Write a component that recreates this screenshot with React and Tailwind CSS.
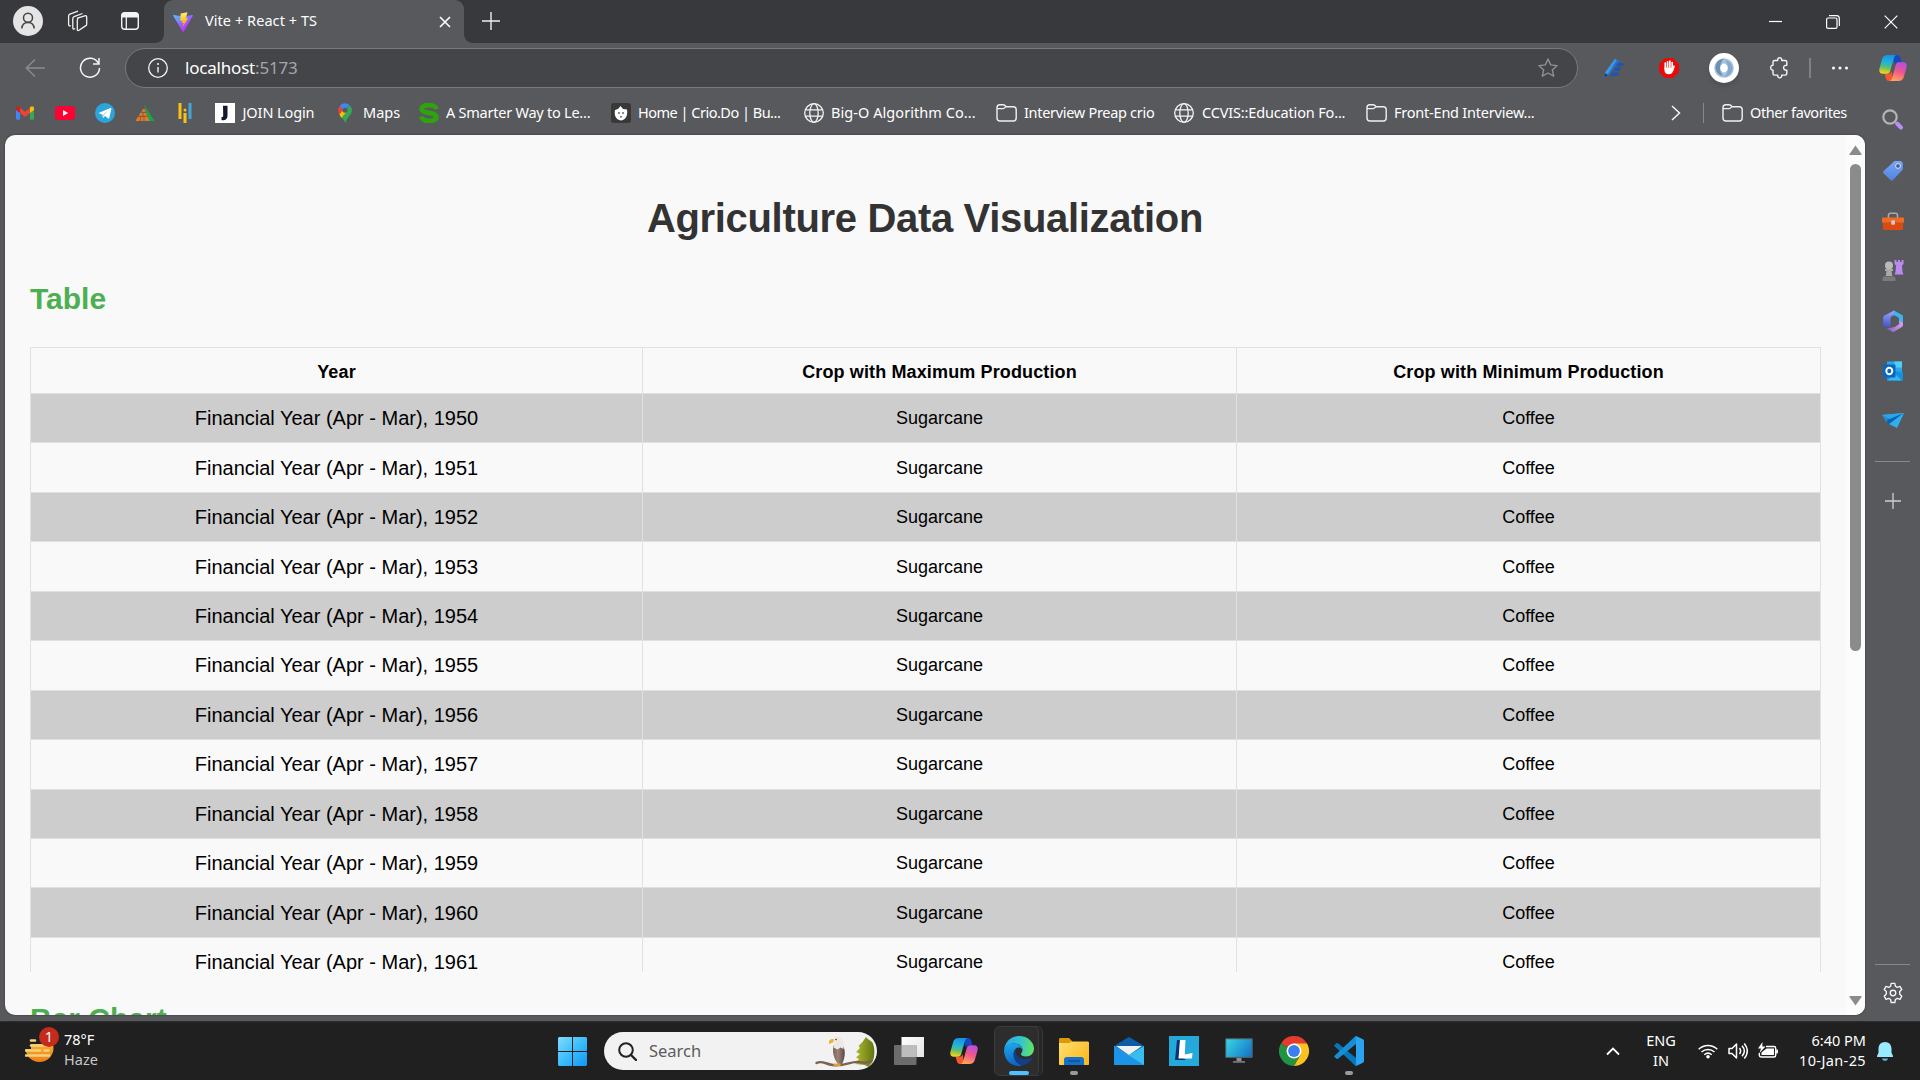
import React from "react";

const UI = "font-['Noto_Sans','Open_Sans',sans-serif]";

function Svg({ w = 20, h = 20, vb, children, className = "" }) {
  return (
    <svg width={w} height={h} viewBox={vb || `0 0 ${w} ${h}`} fill="none" className={`block shrink-0 ${className}`}>
      {children}
    </svg>
  );
}

function T({ className = "", children }) {
  return <span className={`whitespace-nowrap ${className}`}>{children}</span>;
}

function Copilot({ id }) {
  return (
    <Svg w={28} h={26}>
      <defs>
        <linearGradient id={`${id}a`} x1="8" y1="0" x2="5" y2="19" gradientUnits="userSpaceOnUse">
          <stop stopColor="#1593e6" /><stop offset=".4" stopColor="#22b5d8" /><stop offset=".65" stopColor="#5fc06a" /><stop offset=".95" stopColor="#f5d21c" />
        </linearGradient>
        <linearGradient id={`${id}b`} x1="23" y1="7" x2="17" y2="26" gradientUnits="userSpaceOnUse">
          <stop stopColor="#b14fe8" /><stop offset=".5" stopColor="#f0568a" /><stop offset="1" stopColor="#ffa35c" />
        </linearGradient>
      </defs>
      <path d="M14 0h4.200c1.800 0 2.600 1.300 3.100 3l1.200 4.300h-3.300c-2 0-2.900 1-3.400 2.600z" fill="#1447c4" />
      <path d="M14 26H10c-1.800 0-2.700-1.200-3.200-3l-1.200-4.200h3.600c2 0 3-1 3.500-2.700z" fill="#f4582c" />
      <path d="M8.500 0H18c-1.700 0-2.500 1.200-3 2.800l-3.800 13.300c-.5 1.700-1.500 2.700-3.300 2.700H3.600C.8 18.800-.2 16.500.5 13.600L3.200 4C3.900 1.500 5.800 0 8.500 0z" fill={`url(#${id}a)`} />
      <path d="M19.500 26H10c1.700 0 2.500-1.200 3-2.800L16.800 9.900c.5-1.700 1.500-2.700 3.300-2.700h4.300c2.800 0 3.800 2.300 3.100 5.200L24.800 22c-.7 2.500-2.600 4-5.300 4z" fill={`url(#${id}b)`} />
    </Svg>
  );
}

const Globe = () => (
  <Svg>
    <g stroke="#f4f4f4" strokeWidth="1.300">
      <circle cx="10" cy="10" r="9.300" /><ellipse cx="10" cy="10" rx="4.200" ry="9.300" /><path d="M1.500 6.800h17M1.500 13.200h17" />
    </g>
  </Svg>
);

const Folder = () => (
  <Svg w={21} h={20}>
    <path d="M1 5.300V4.500C1 2.700 2 1.700 3.700 1.700H7c.9 0 1.400.3 2 .9l1.200 1.200h7.100c1.800 0 2.900 1 2.900 2.900v8.400c0 1.800-1.100 2.900-2.900 2.900H3.900C2.100 18 1 16.900 1 15.100z" stroke="#f0f0f0" strokeWidth="1.400" />
    <path d="M1 5.600h5.800c.8 0 1.300-.2 1.800-.8l1.200-1" stroke="#f0f0f0" strokeWidth="1.200" />
  </Svg>
);

const Gmail = () => (
  <Svg>
    <path d="M1 5v10.500c0 .8.500 1.200 1.200 1.200H5V8z" fill="#4285f4" />
    <path d="M19 5v10.500c0 .8-.5 1.200-1.200 1.200H15V8z" fill="#34a853" />
    <path d="M5 4.800l5 3.900 5-3.900v5.300l-5 3.900-5-3.900z" fill="#ea4335" />
    <path d="M1 5.200C1 3.400 3 2.500 4.400 3.800L5 4.300v5.800L1 7z" fill="#c5221f" />
    <path d="M19 5.200c0-1.800-2-2.700-3.400-1.400l-.6.5v5.800L19 7z" fill="#fbbc04" />
  </Svg>
);
const YouTube = () => (
  <Svg><rect y="3" width="20" height="14" rx="3.500" fill="#ff0033" /><path d="M8 7v6l5.200-3z" fill="#fff" /></Svg>
);
const Telegram = () => (
  <Svg>
    <circle cx="10" cy="10" r="10" fill="#2ca5dd" />
    <path d="M3.500 10L15.500 5c.6-.2 1 .1.800.9l-2 9c-.1.700-.6.800-1.100.5L10 13l-1.600 1.700c-.3.300-.6.200-.6-.2l-.3-2.800z" fill="#fff" />
    <path d="M7.500 11.700l6-4.500-4.700 5.400-.6 2z" fill="#b9d9ea" />
  </Svg>
);
const Peak = () => (
  <Svg>
    <path d="M9 1.500L19.500 18H14z" fill="#12a84b" />
    <path d="M7.800 6h2l1 3H6.500z M5.500 9.500H11l1.500 3.500H3.700z M3 13.500h9.800L14.500 18H.5z" fill="#e87722" />
    <path d="M3 13.200h9.500M6 9.300h5M8 9.500v3.700M5.500 13.500V18M9 13.500V18" stroke="#6b5745" strokeWidth=".7" />
  </Svg>
);
const Bars = () => (
  <Svg>
    <path d="M5 0v16M10 10v10" stroke="#fbc112" strokeWidth="3" /><circle cx="10" cy="7" r="1.500" fill="#fbc112" /><path d="M15 0v16" stroke="#42a5dc" strokeWidth="3" />
  </Svg>
);
const JoinIcon = () => (
  <Svg><path fill="#fff" d="M0 0h20v20H0z" /><path d="M8 2.800h4.500v10c0 3.500-2.500 5-6 4.200v-3c1 .2 1.700-.2 1.700-1.500z" fill="#111a2c" /></Svg>
);
const Maps = () => (
  <Svg>
    <path d="M4.300 11.300L14.800 2.500C16.500 4 17.200 6 16.900 8.100 16.400 12 12.500 14 10.400 20 9 16.500 5.500 14 4.300 11.300z" fill="#34a853" />
    <path d="M4.300 11.300C2.500 7.500 3 5 5 2.500l5 4.700z" fill="#ea4335" />
    <path d="M5 2.500C7.500-.6 12-.6 14.800 2.500L8.200 8z" fill="#4285f4" />
    <path d="M4.400 11.500l4-4.700 3 2.300-5 5.900z" fill="#fbbc04" />
    <circle cx="10" cy="7.200" r="2.500" fill="#58595d" />
  </Svg>
);
const BigS = () => (
  <Svg>
    <path d="M17.300 6.200C16.600.8 2.600.8 2.700 6 2.800 10.800 17.400 8.800 17.400 14.200 17.400 19.200 3 19.200 2.300 13.600" stroke="#2fa30e" strokeWidth="4.800" />
  </Svg>
);
const Crio = () => (
  <Svg>
    <rect width="20" height="20" rx="3" fill="#383838" />
    <path d="M4 7l3-1 2.500-3L12 6l4 .5c.7 4.500 0 10-6 11C4.500 16.500 3 12 4 7z" fill="#fff" />
    <circle cx="8" cy="10" r=".9" fill="#555" /><circle cx="12" cy="10" r=".9" fill="#555" /><path d="M9 13h2v1.500H9z" fill="#777" />
  </Svg>
);

const marks = [
  ["w-[40px]", Gmail], ["w-[40px]", YouTube], ["w-[40px]", Telegram], ["w-[40px]", Peak], ["w-[40px]", Bars],
  ["w-[120px]", JoinIcon, "JOIN Login", "tracking-[-0.1px] ml-[0.5px]"],
  ["w-[84px]", Maps, "Maps", "ml-[1px]"],
  ["w-[192px]", BigS, "A Smarter Way to Le...", "tracking-[-0.24px]"],
  ["w-[193px]", Crio, "Home | Crio.Do | Bu...", "tracking-[-0.5px]"],
  ["w-[192px]", Globe, "Big-O Algorithm Co...", "tracking-[0.06px]"],
  ["w-[178px]", Folder, "Interview Preap crio", "tracking-[-0.3px]"],
  ["w-[192px]", Globe, "CCVIS::Education Fo...", "tracking-[-0.16px] ml-[1px]"],
  ["w-[200px]", Folder, "Front-End Interview...", "tracking-[-0.22px]"],
];

function TitleBar() {
  return (
    <header className="flex h-[43px] shrink-0 items-center bg-[#38393d]">
      <div className="flex w-[164px] items-center pb-[1px] pl-[13px]">
        <Svg w={30} h={30}>
          <circle cx="15" cy="15" r="15" fill="#e4e4e4" />
          <g stroke="#444" strokeWidth="1.500"><circle cx="15" cy="11.800" r="4.500" /><path d="M8.800 22.500c.3-4 2.700-6 6.200-6s5.900 2 6.200 6" /></g>
        </Svg>
        <Svg w={22} h={22} className="ml-[23px]">
          <g stroke="#f2f2f2" strokeWidth="1.300" strokeLinejoin="round">
            <path d="M11.500 8.200l7.200-2.400c1.300-.4 2 .1 2 1.400v7c0 .8-.4 1.400-1.200 1.700l-6.500 4.400c-1 .6-1.700.2-1.700-.9V10.200c0-1 .3-1.600.9-2z" />
            <path d="M9 18.500c-1.200 1-2.200.6-2.200-.7V8.600c0-1 .4-1.600 1.300-2L16.500 3.500" />
            <path d="M4.800 15.500c-1.200.8-2.200.4-2.200-.9V6.200c0-1 .4-1.600 1.300-2L12 1.200" />
          </g>
        </Svg>
        <Svg w={20} h={20} className="ml-[32px]">
          <rect x="1.700" y="1.700" width="16.600" height="16.600" rx="3" stroke="#f4f4f4" strokeWidth="1.400" />
          <path d="M1.700 6.500V4.200c0-1.500 1-2.500 2.500-2.500h11.600c1.500 0 2.500 1 2.500 2.500v2.300z" fill="#f4f4f4" /><path d="M6.300 6v12" stroke="#f4f4f4" strokeWidth="1.300" />
        </Svg>
      </div>
      <div className="relative flex h-full w-[300px] items-center rounded-t-[9px] bg-[#58595d] pl-[9px]">
        <Svg w={9} h={9} className="absolute bottom-0 -left-[9px]"><path d="M9 0v9H0c5 0 9-4 9-9z" fill="#58595d" /></Svg>
        <Svg w={9} h={9} className="absolute -right-[9px] bottom-0"><path d="M0 0v9h9C4 9 0 5 0 0z" fill="#58595d" /></Svg>
        <Svg w={20} h={20} vb="0 0 32 32">
          <defs>
            <linearGradient id="v1" x1="0" y1="2" x2="18" y2="28" gradientUnits="userSpaceOnUse"><stop stopColor="#41d1ff" /><stop offset="1" stopColor="#bd34fe" /></linearGradient>
            <linearGradient id="v2" x1="15" y1="2" x2="19" y2="20" gradientUnits="userSpaceOnUse"><stop stopColor="#ffea83" /><stop offset=".3" stopColor="#ffdd35" /><stop offset="1" stopColor="#ffa800" /></linearGradient>
          </defs>
          <path d="M31.800 5.900L17 31.500c-.3.600-1.100.6-1.400 0L.3 5.900C0 5.300.500 4.600 1.200 4.700l15 2.600 14.800-2.600c.7-.1 1.200.6.800 1.200z" fill="url(#v1)" />
          <path d="M23.300.2l-11 2.200-.7 11.400c0 .3.300.5.500.4l3-.7-.9 4.400 2.800-.6-1.500 6.700c3-4.500 6-10 8.500-14.500l-3.600.6z" fill="url(#v2)" />
        </Svg>
        <T className={`${UI} ml-[12px] pb-[2px] text-[14.500px] tracking-[0.06px] text-white`}>Vite + React + TS</T>
        <Svg w={12} h={12} className="mr-[13px] ml-auto"><path d="M1 1l10 10M11 1L1 11" stroke="#fff" strokeWidth="1.600" /></Svg>
      </div>
      <Svg w={18} h={18} className="mb-[1px] ml-[18px]"><path d="M9 0v18M0 9h18" stroke="#eee" strokeWidth="1.400" /></Svg>
      <div className="ml-auto flex items-center gap-[44px] pr-[22px]">
        <Svg w={13} h={13}><path d="M0 6.500h13" stroke="#fff" strokeWidth="1.200" /></Svg>
        <Svg w={14} h={14}><rect x=".6" y="3" width="10.400" height="10.400" rx="1.500" stroke="#fff" strokeWidth="1.200" /><path d="M3 .7h7.500c1.800 0 2.800 1 2.800 2.800V11" stroke="#fff" strokeWidth="1.200" /></Svg>
        <Svg w={14} h={14}><path d="M.7.7l12.600 12.600M13.300.7L.7 13.300" stroke="#fff" strokeWidth="1.200" /></Svg>
      </div>
    </header>
  );
}

function Toolbar() {
  return (
    <div className="flex h-[50px] shrink-0 items-center">
      <div className="flex w-[125px] items-center gap-[34px] pl-[25px]">
        <Svg w={20} h={20}><path d="M10 1.500L1.300 10l8.700 8.500M1.500 10H20" stroke="#8b8c8f" strokeWidth="1.400" /></Svg>
        <Svg w={22} h={22}><path d="M19.500 6.500A9.500 9.500 0 1 0 20.500 11M20 1v6h-6" stroke="#f4f4f4" strokeWidth="1.500" /></Svg>
      </div>
      <div className="flex h-[40px] w-[1453px] items-center rounded-full border border-[#797a7d] bg-[#444548] pl-[22px]">
        <Svg><circle cx="10" cy="10" r="9.300" stroke="#f4f4f4" strokeWidth="1.300" /><path d="M10 9v5.500" stroke="#f4f4f4" strokeWidth="1.400" /><circle cx="10" cy="6" r="1" fill="#f4f4f4" /></Svg>
        <T className={`${UI} ml-[17px] text-[17px] tracking-[-0.2px] text-white`}>localhost<span className="text-[#a5a6a8]">:5173</span></T>
        <Svg w={20} h={20} className="mr-[19px] ml-auto"><path d="M10 1l2.700 5.900 6.400.7-4.800 4.300 1.400 6.300L10 15l-5.700 3.200 1.400-6.300L.9 7.600l6.400-.7z" stroke="#8f9092" strokeWidth="1.400" strokeLinejoin="round" /></Svg>
      </div>
      <div className="flex flex-1 items-center pl-[26px]">
        <Svg w={20} h={20}>
          <path d="M12 5h8l-1.500 3H12zM11 9.500h6L15.500 13H10zM8 14.500h7L13.500 18H6z" fill="#1a56b4" />
          <path d="M11 .8l4 2.200L4.500 16.800.5 19.500 1 14.500z" fill="#3b97ea" /><path d="M13 1.800l2 1.200L4.500 16.800l-1.500 1z" fill="#1d6fd0" /><path d="M1 15l3 2-3.500 2.500z" fill="#123c80" />
        </Svg>
        <Svg w={20} h={20} className="ml-[35px]">
          <path d="M6 0h8l6 6v8l-6 6H6l-6-6V6z" fill="#ea0a0a" />
          <path d="M6.300 11V5.200M8.600 9V3.800M10.900 9V3.200M13.200 10V4.600M15 8.300l-1.300 4" stroke="#fff" strokeWidth="1.700" strokeLinecap="round" /><path d="M5.500 9.500h8.800l-.3 3.500c-.4 2-1.500 3.200-4 3.200-3 0-4.500-1.500-4.500-4z" fill="#fff" />
        </Svg>
        <div className="ml-[30px] flex size-[30px] items-center justify-center rounded-full bg-white shadow-md">
          <Svg>
            <circle cx="10" cy="10" r="6.800" stroke="#a9c3db" strokeWidth="6" />
            <path d="M10 .8C2.500 1.500-.5 9 3 14c2 3 4.500 4 6.500 3.500C5 15 4.500 6 10 .8z" fill="#6b90b5" /><path d="M10 19.200c7.500-.7 10.500-8.200 7-13.200-2-3-4.500-4-6.500-3.500C15 5 15.500 14 10 19.200z" fill="#86aacd" />
            <ellipse cx="10" cy="10" rx="2.600" ry="4.500" fill="#fff" />
          </Svg>
        </div>
        <Svg w={20} h={22} className="ml-[31px]">
          <path d="M4.500 3.500h3.200c-.2-1.700.6-2.800 2-2.800s2.200 1.100 2 2.800h3.600c.9 0 1.500.6 1.500 1.500v3.300c-1.800-.2-3.200.7-3.200 2.400s1.400 2.600 3.200 2.400v3.500c0 .9-.6 1.500-1.500 1.500h-3.600c.2 1.700-.6 2.800-2 2.800s-2.200-1.100-2-2.800H4.500c-.9 0-1.500-.6-1.500-1.500v-3.500C1.500 13.200.7 12.300.7 10.700S1.500 8.200 3 8.300V5c0-.9.600-1.500 1.500-1.500z" stroke="#f4f4f4" strokeWidth="1.400" strokeLinejoin="round" />
        </Svg>
        <div className="ml-[19px] h-[20px] w-[2px] bg-[#808184]" />
        <Svg w={18} h={4} className="ml-[20px]"><g fill="#fff"><circle cx="2.500" cy="2" r="1.500" /><circle cx="9" cy="2" r="1.500" /><circle cx="15.500" cy="2" r="1.500" /></g></Svg>
      </div>
    </div>
  );
}

function Bookmarks() {
  return (
    <nav className="flex h-[42px] shrink-0 items-center pb-[2px] pl-[15px]">
      {marks.map(([w, Icon, label, tr], i) => (
        <div key={i} className={`flex shrink-0 items-center gap-[7px] ${w}`}>
          <Icon />
          {label && <T className={`${UI} text-[14.500px] text-white ${tr}`}>{label}</T>}
        </div>
      ))}
      <Svg w={10} h={16} className="mr-[22px] ml-auto"><path d="M1 1l7.500 7L1 15" stroke="#f4f4f4" strokeWidth="1.500" /></Svg>
      <div className="mr-[18px] h-[20px] w-px bg-[#87888b]" />
      <div className="flex w-[143px] items-center gap-[7px]"><Folder /><T className={`${UI} text-[14.500px] tracking-[-0.4px] text-white`}>Other favorites</T></div>
    </nav>
  );
}

const years = Array.from({ length: 12 }, (_, i) => 1950 + i);

function Page() {
  return (
    <main className="ml-[5px] flex h-[880px] w-[1860px] shrink-0 overflow-hidden rounded-[10px] bg-[#f9f9f9] font-['Liberation_Sans',Arial,sans-serif] shadow-[0_0_2px_#333]">
      <div className="h-full w-[1841px] pl-[25px]">
        <h1 className="mt-[59px] w-[1790px] text-center text-[40px] leading-[48px] font-bold tracking-[-0.33px] text-[#333]"><T>Agriculture Data Visualization</T></h1>
        <h2 className="mt-[39px] text-[30px] leading-[36px] font-bold text-[#4caf50]"><T>Table</T></h2>
        <div className="mt-[30px] h-[625px] w-[1791px] overflow-hidden">
          <div className="grid grid-cols-[612px_594px_585px] border-t border-[#dee2e6] text-center text-black">
            {["Year", "Crop with Maximum Production", "Crop with Minimum Production"].map((h, i) => (
              <div key={h} className={`flex h-[46px] items-center justify-center border-b border-l border-[#dee2e6] pt-[1px] text-[18px] font-bold tracking-[0.13px] ${i === 2 ? "border-r" : ""}`}><T className="translate-y-px">{h}</T></div>
            ))}
          </div>
          {years.map((y, i) => (
            <div key={y} className={`grid h-[49.450px] grid-cols-[612px_594px_585px] text-center text-black ${i % 2 ? "" : "bg-[#cdcdcd]"}`}>
              <div className="flex items-center justify-center border-b border-l border-[#dee2e6] text-[20px]"><T>Financial Year (Apr - Mar), {y}</T></div>
              <div className="flex items-center justify-center border-b border-l border-[#dee2e6] pt-[1px] text-[18px]"><T>Sugarcane</T></div>
              <div className="flex items-center justify-center border-x border-b border-[#dee2e6] pt-[1px] text-[18px]"><T>Coffee</T></div>
            </div>
          ))}
        </div>
        <h2 className="mt-[29px] text-[30px] leading-[36px] font-bold text-[#4caf50]"><T>Bar Chart</T></h2>
      </div>
      <div className="flex w-[19px] flex-col items-center bg-[#fcfcfc] pt-[10px] pb-[9px]">
        <Svg w={13} h={10}><path d="M6.500.5L12.500 9c.2.500 0 1-.6 1H1.100c-.6 0-.8-.5-.6-1z" fill="#8b8b8b" /></Svg>
        <div className="mt-[9px] h-[487px] w-[11px] rounded-full bg-[#8b8b8b]" />
        <Svg w={13} h={10} className="mt-auto"><path d="M6.500 9.500L.5 1C.3.500.500 0 1.100 0h10.800c.6 0 .8.500.6 1z" fill="#8b8b8b" /></Svg>
      </div>
    </main>
  );
}

function SideBar() {
  return (
    <aside className="flex w-[55px] shrink-0 flex-col items-center pt-[12px]">
      <Copilot id="cs" />
      <Svg w={22} h={22} className="mt-[28px]"><circle cx="8" cy="8" r="6.700" stroke="#b4b4b2" strokeWidth="2.200" /><path d="M15 14.500l4 4" stroke="#bd8cf5" strokeWidth="4" strokeLinecap="round" /></Svg>
      <Svg w={22} h={22} className="mt-[29px]">
        <defs><linearGradient id="tg" x1="0" y1="0" x2="0" y2="22" gradientUnits="userSpaceOnUse"><stop stopColor="#78a8f5" /><stop offset="1" stopColor="#4f80e0" /></linearGradient></defs>
        <path d="M12.500 1H19l1.800 2v6.500L11 20c-.8.800-1.700.8-2.500 0L1.700 13.500c-.8-.8-.8-1.700 0-2.500z" fill="url(#tg)" /><circle cx="16" cy="6" r="2.400" fill="#405b92" stroke="#dce8ff" />
      </Svg>
      <Svg w={22} h={20} className="mt-[30px]">
        <path d="M6.500 6V3.500C6.500 2 7 1.300 8.500 1.300h5c1.500 0 2 .7 2 2.200V6" stroke="#aaa" strokeWidth="1.600" />
        <path d="M1 5.500h20c.6 0 1 .4 1 1v4.200H0V6.500c0-.6.400-1 1-1z" fill="#f26a24" /><path d="M1 10.700h20v5.800c0 .9-.6 1.500-1.500 1.500h-17C1.600 18 1 17.400 1 16.500z" fill="#dc4a12" /><rect x="9.200" y="8.300" width="3.800" height="4.500" rx="1" fill="#c9c9c9" />
      </Svg>
      <Svg w={22} h={23} className="mt-[27px]">
        <path d="M12.500 1h2v2H16V1h2v2h1.500V1h2v4l-1.500 1.500.5 6.500 1 2.500h-9l1-2.500.500-6.500L12.500 5z" fill="#bb8af0" />
        <circle cx="7" cy="6.500" r="4" fill="#bababa" /><path d="M3 10h8v2H9.500l.8 5H3.700l.8-5H3z" fill="#a9a9a9" /><path d="M1.500 17.500h11l1 2v2.500H.5v-2.500z" fill="#7b7b7b" />
      </Svg>
      <Svg w={20} h={22} className="mt-[28px]">
        <defs>
          <linearGradient id="m1" x1="8" y1="0" x2="4" y2="18" gradientUnits="userSpaceOnUse"><stop stopColor="#9fa8ff" /><stop offset="1" stopColor="#4051c8" /></linearGradient>
          <linearGradient id="m3" x1="3" y1="18" x2="18" y2="14" gradientUnits="userSpaceOnUse"><stop stopColor="#7b5bc4" /><stop offset="1" stopColor="#d49ae8" /></linearGradient>
        </defs>
        <path d="M11 .5L1.500 5.500C.5 6 0 7 0 8v6.500c0 1 .5 1.800 1.300 2.300L5.500 17c1.500 0 2-1 2-2V8.500c0-1 .4-1.700 1.300-2.200L13 4z" fill="url(#m1)" />
        <path d="M11 .5l8 4.500c.7.400 1 1 1 2v8L16 11.500V9c0-1-.4-1.500-1.200-2L10.500 5z" fill="#3bb5ee" />
        <path d="M20 13v2c0 .9-.4 1.500-1.200 2l-7.500 4.500c-.9.500-1.700.5-2.600 0l-5-3 8-1.500 4.500-3V10.500z" fill="url(#m3)" />
      </Svg>
      <Svg w={20} h={20} className="mt-[29px]">
        <path d="M4 .5h15V12H4z" fill="#28a8ea" /><path d="M11.500.5H19v6h-7.500z" fill="#50d0f8" /><path d="M4 9.500l16 1.500v7.500c0 .6-.4 1-1 1H4z" fill="#1490df" /><path d="M4 19.500h15L12 13z" fill="#35b8f1" />
        <rect y="3.500" width="12.500" height="13" rx="1" fill="#0a66c0" /><ellipse cx="6.300" cy="10" rx="3" ry="3.300" stroke="#fff" strokeWidth="1.900" />
      </Svg>
      <Svg w={22} h={18} className="mt-[31px]">
        <path d="M0 3L22 1 11 9z" fill="#55c8fa" /><path d="M22 1L4 10 0 3z" fill="#1a9be8" opacity=".75" /><path d="M5 8L22 1 6.500 13z" fill="#0b62ae" /><path d="M22 1L15 16l-8-4z" fill="#2eb0f0" />
      </Svg>
      <div className="mt-[31px] h-px w-[35px] bg-[#87888b]" />
      <Svg w={16} h={16} className="mt-[31px]"><path d="M8 0v16M0 8h16" stroke="#d0d0d0" strokeWidth="1.300" /></Svg>
      <div className="mt-auto h-px w-[35px] bg-[#87888b]" />
      <Svg w={22} h={22} vb="0 0 24 24" className="mt-[17px] mb-[17px]">
        <path d="M10 1.500h4l.6 3.100 2 1.200 3-1 2 3.500-2.300 2.100v2.800l2.300 2.300-2 3.400-3-1-2 1.200-.6 3.300h-4l-.6-3.300-2-1.200-3 1-2-3.400 2.300-2.300v-2.800L2.400 8.300l2-3.500 3 1 2-1.200z" stroke="#f4f4f4" strokeWidth="1.500" strokeLinejoin="round" /><circle cx="12" cy="12" r="3" stroke="#f4f4f4" strokeWidth="1.500" />
      </Svg>
    </aside>
  );
}

function Slot({ children, mark = "" }) {
  return (
    <div className="relative flex h-[50px] w-[55px] items-center justify-center">
      {children}
      {mark && <div className={`absolute bottom-[1px] h-[4px] rounded-full ${mark}`} />}
    </div>
  );
}

function TaskBar() {
  return (
    <footer className="flex h-[59px] shrink-0 items-center border-t border-[#2d2e30] bg-[#202020]">
      <div className="flex w-[558px] items-center pl-[25px]">
        <div className="relative">
          <Svg w={30} h={28}>
            <defs><linearGradient id="hz" x1="0" y1="0" x2="0" y2="26" gradientUnits="userSpaceOnUse"><stop stopColor="#fcc33c" /><stop offset="1" stopColor="#ee7a16" /></linearGradient></defs>
            <circle cx="14.500" cy="11" r="14" fill="url(#hz)" /><path d="M0 0h30v7H0zM0 0h6v12H0z" fill="#202020" />
            <path d="M6 3.500h4M6 8.500h20M1 13.500h14M19.500 13.500h4M1 18.500h23" stroke="#f3d27a" strokeWidth="2.600" strokeLinecap="round" />
          </Svg>
          <div className="absolute -top-[10px] left-[14px] flex size-[20px] items-center justify-center rounded-full bg-[#c42b1c] font-['Noto_Sans',sans-serif] text-[14.500px] text-white">1</div>
        </div>
        <div className={`${UI} ml-[9px] flex flex-col pb-[4px] text-[14.500px] leading-[20px]`}>
          <T className="text-white">78°F</T><T className="text-[#c8c8c8]">Haze</T>
        </div>
      </div>
      <Svg w={29} h={29}>
        <defs><linearGradient id="wn" x1="0" y1="0" x2="29" y2="29" gradientUnits="userSpaceOnUse"><stop stopColor="#7fdcff" /><stop offset=".5" stopColor="#3dbdfb" /><stop offset="1" stopColor="#1294f6" /></linearGradient></defs>
        <path d="M1 0h13v14H0V1zM15 0h13l1 1v13H15zM0 15h14v14H1l-1-1zM15 15h14v13l-1 1H15z" fill="url(#wn)" />
      </Svg>
      <div className="ml-[17px] flex h-[38px] w-[273px] items-center overflow-hidden rounded-full bg-[#f2f2f2] pl-[14px]">
        <Svg w={19} h={19}><circle cx="8" cy="8" r="6.800" stroke="#222" strokeWidth="2" /><path d="M13 13l5 5" stroke="#222" strokeWidth="2.400" strokeLinecap="round" /></Svg>
        <T className={`${UI} ml-[12px] text-[16.500px] text-[#5c5c5c]`}>Search</T>
        <Svg w={62} h={38} className="ml-auto">
          <defs>
            <linearGradient id="tr" x1="42" y1="0" x2="60" y2="0" gradientUnits="userSpaceOnUse"><stop stopColor="#a9b32a" /><stop offset="1" stopColor="#5e7312" /></linearGradient>
            <linearGradient id="eg" x1="16" y1="0" x2="30" y2="0" gradientUnits="userSpaceOnUse"><stop stopColor="#6f5850" /><stop offset=".5" stopColor="#9a8278" /><stop offset="1" stopColor="#5a4640" /></linearGradient>
          </defs>
          <path d="M51 5c1.500 2 4 3.500 6.500 5.500C60 16 60 24 57.500 30l-4 5-4-2-9.500-1 4-5-3-1.500 4-3.500-4-2 4-4-1.500-2 4-4z" fill="url(#tr)" />
          <path d="M1.500 31c5-3 9 1 16 2 11 2 19-4 26-3 5 .5 8 2 12-1" stroke="#7b6250" strokeWidth="2.400" strokeLinecap="round" />
          <path d="M18.500 14c3-3 8-3 10 1 2 4 1.500 10-.5 15l-2 4.500-3-2.500c-4-5-6-12-4.500-18z" fill="url(#eg)" />
          <path d="M17.500 8c.5-3.500 6-5 9-2 2.500 2.500 2 7 2 11l-3-1.500-3 2-4-2 1.500-5z" fill="#ede8e1" />
          <path d="M18.500 7c-3-.5-5 1-4.500 5l4.500-2z" fill="#eeb02a" /><circle cx="21" cy="7.500" r=".8" fill="#333" /><path d="M18.500 31.500h7v2.500h-7z" fill="#dfa12d" />
        </Svg>
      </div>
      <div className="ml-[4px] flex items-center">
        <Slot>
          <Svg w={30} h={28}>
            <defs><linearGradient id="tv" x1="7" y1="0" x2="30" y2="20" gradientUnits="userSpaceOnUse"><stop stopColor="#fff" /><stop offset="1" stopColor="#e4e4e4" /></linearGradient></defs>
            <path fill="url(#tv)" d="M7.500 0H30v20H7.500z" /><rect y="8" width="22.500" height="20" rx="1" fill="#6c6c6c" /><path fill="#bdbdbd" d="M7.500 8h15v12h-15z" />
          </Svg>
        </Slot>
        <Slot><Copilot id="ct" /></Slot>
        <div className="relative -mr-[2px] flex h-[50px] w-[57px] items-center pl-[3px]">
          <div className="absolute left-[11px] h-[50px] w-[41px] rounded-[6px] border border-[#3a3a3a] bg-[#262626]" />
          <div className="relative flex h-[50px] w-[45px] items-center justify-center rounded-[6px] border border-[#3c3c3c] bg-[#2d2d2d] pl-[5px]">
            <Svg w={30} h={30}>
              <defs>
                <linearGradient id="e1" x1="2" y1="8" x2="30" y2="12" gradientUnits="userSpaceOnUse"><stop stopColor="#2aa9e8" /><stop offset=".5" stopColor="#31c5d0" /><stop offset="1" stopColor="#66e35c" /></linearGradient>
                <linearGradient id="e2" x1="5" y1="9" x2="9" y2="30" gradientUnits="userSpaceOnUse"><stop stopColor="#1ca2ea" /><stop offset="1" stopColor="#0c62c0" /></linearGradient>
              </defs>
              <path d="M0 14C1 5.500 7.300 0 15 0c9 0 15 6.500 15 12.500 0 5-3.600 8-8 8-3.500 0-5-1.200-5-2.500 0-1 1.500-1.600 1.500-4.500 0-3-3.500-6-8-6C5.500 7.500 1.500 10 0 14z" fill="url(#e1)" />
              <path d="M0 14c1.500-4.500 5.500-6.500 10-6.500 4.800 0 8.500 3 8.500 6-3.500-4.500-9-1-9 5 0 6 5 10.500 9.500 11C8.500 32 0 25 0 14z" fill="url(#e2)" />
              <path d="M13 12.500c-6 4.500-2.500 14.500 5 16.900 4.500-.7 8.500-3.500 10.300-6.900.4-.7-.3-1.200-1-.8C20.500 25 12 22 12 16c0-1.300.3-2.600 1-3.500z" fill="#123f86" />
            </Svg>
          </div>
          <div className="absolute bottom-[1px] left-[18px] h-[4px] w-[20px] rounded-full bg-[#4cc2ff]" />
        </div>
        <Slot mark="w-[8px] bg-[#9a9a9a]">
          <Svg w={30} h={27}>
            <defs><linearGradient id="fd" x1="0" y1="4" x2="26" y2="27" gradientUnits="userSpaceOnUse"><stop stopColor="#ffdf70" /><stop offset="1" stopColor="#fbb91e" /></linearGradient></defs>
            <path d="M0 1.500C0 .5.500 0 1.500 0H10l3 3v4H0z" fill="#dc9a08" /><path d="M0 5h10l3-1.500h15.500c1 0 1.500.5 1.500 1.500v21c0 .6-.4 1-1 1H1c-.6 0-1-.4-1-1z" fill="url(#fd)" />
            <path d="M5 27v-5c0-2 1-3 3-3h14c2 0 3 1 3 3v5z" fill="#1571c8" /><path d="M9 23h12" stroke="#0b4d94" strokeWidth="1.400" />
          </Svg>
        </Slot>
        <Slot>
          <Svg w={30} h={28}>
            <path d="M0 9L14 .5c.7-.4 1.300-.4 2 0L30 9v10H0z" fill="#0c5ca8" /><path d="M0 9l15 9L30 9v19H0z" fill="#38bdf2" /><path d="M0 9l30 19H0z" fill="#1b93e6" /><path d="M2 9h26l-13 9z" fill="#f1f1f1" />
          </Svg>
        </Slot>
        <Slot><Svg w={30} h={30}><path fill="#24a9da" d="M0 0h30v30H0z" /><path d="M8 4l3 0-.8 15.500L17 24H6z" fill="#0b3272" /><path d="M11 4h5.500l-.7 14.500 7.700-1.500-.5 5.500H9.500z" fill="#fff" /></Svg></Slot>
        <Slot>
          <Svg w={28} h={26}>
            <defs><linearGradient id="mn" x1="0" y1="0" x2="26" y2="20" gradientUnits="userSpaceOnUse"><stop stopColor="#3adbe6" /><stop offset="1" stopColor="#1470c6" /></linearGradient></defs>
            <path fill="url(#mn)" stroke="#56606a" d="M.8.800h26.400v18.600H.8z" /><path d="M11.500 20h5v3h-5z" fill="#8a8f94" /><path d="M8 23h12v1.800H8z" fill="#6f757b" />
          </Svg>
        </Slot>
        <Slot>
          <Svg w={30} h={30}>
            <path d="M15 15L2 7.500A15 15 0 0 1 28 7.500z" fill="#e33b2e" /><path d="M15 15L2 7.500A15 15 0 0 0 15 30l6.500-11.200z" fill="#229345" /><path d="M15 7.500h13A15 15 0 0 1 15 30l6.500-11.200z" fill="#fcc31e" /><circle cx="15" cy="15" r="7.500" fill="#fff" /><circle cx="15" cy="15" r="5.900" fill="#3a7ef0" />
          </Svg>
        </Slot>
        <Slot mark="w-[8px] bg-[#9a9a9a]">
          <Svg w={30} h={30}>
            <path d="M22 0l7 3.300c.6.300 1 .9 1 1.600v20.200c0 .7-.4 1.300-1 1.600L22 30l-1.500-1.500L22 22V8l-1.500-6.500z" fill="#2aa4f0" />
            <path d="M22 22L4 7.200c-.5-.4-1-.4-1.500 0L.8 8.700c-.6.600-.6 1.300 0 1.900L20.500 29c.5.500 1 .8 1.500 1z" fill="#0877ba" />
            <path d="M22 8L4 22.800c-.5.400-1 .4-1.500 0L.8 21.300c-.6-.6-.6-1.300 0-1.900L20.500 1c.5-.5 1-.8 1.500-1z" fill="#168ed6" />
          </Svg>
        </Slot>
      </div>
      <div className="ml-auto flex items-center pr-[27px] text-white">
        <Svg w={14} h={10}><path d="M1 8.500l6-6 6 6" stroke="#fff" strokeWidth="1.800" /></Svg>
        <div className={`${UI} ml-[26px] flex w-[30px] flex-col items-center pb-[2px] text-[14.500px] leading-[20px]`}><T>ENG</T><T>IN</T></div>
        <Svg w={20} h={16} className="ml-[22px]">
          <g stroke="#fff" strokeWidth="1.500"><path d="M.7 6.200c5.200-5 13.400-5 18.600 0M3.500 9c3.700-3.500 9.300-3.500 13 0M6.300 11.800c2.200-2 5.200-2 7.400 0" /></g><circle cx="10" cy="13.800" r="1.800" fill="#fff" />
        </Svg>
        <Svg w={20} h={18} className="ml-[10px]"><path d="M1 6.500h3L8.500 2v14L4 11.500H1zM11.500 6c1.500 2 1.500 4 0 6M14 3.800c3 3.300 3 7.100 0 10.400M16.300 1.500c4 5 4 10 0 15" stroke="#fff" strokeWidth="1.500" strokeLinejoin="round" /></Svg>
        <Svg w={20} h={18} className="ml-[10px]"><path d="M8 4.500h8c1 0 1.700.7 1.700 1.700v7c0 1-.7 1.800-1.700 1.800H3.500c-1.300 0-2.200-.9-2.200-2.200V11" stroke="#fff" strokeWidth="1.400" /><path d="M8.500 6.500H16v6.500H3.500v-2.500z" fill="#fff" /><path d="M18.200 7.500h1c.5 0 .8.300.8.800v2.400c0 .5-.3.800-.8.800h-1z" fill="#fff" /><path d="M4.500 0L0 6.500h3L1.500 11 7.500 4.500H4.300z" fill="#fff" /></Svg>
        <div className={`${UI} ml-[20px] flex w-[68px] flex-col items-end pb-[3px] text-[14.500px] leading-[20px]`}><T>6:40 PM</T><T className="tracking-[0.38px]">10-Jan-25</T></div>
        <Svg w={16} h={19} className="ml-[11px]"><path d="M8 0c3.800 0 6.500 2.800 6.500 6.500v4.300l1.400 3c.3.600 0 1.200-.7 1.200H.8c-.7 0-1-.6-.7-1.200l1.400-3V6.500C1.500 2.800 4.200 0 8 0z" fill="#99ebff" /><path d="M5 16.500h6c-.4 1.500-1.500 2.300-3 2.300s-2.600-.8-3-2.300z" fill="#62b6cc" /></Svg>
      </div>
    </footer>
  );
}

export default function App() {
  return (
    <div className="flex h-[1080px] w-[1920px] flex-col overflow-hidden bg-[#58595d]">
      <TitleBar />
      <div className="flex h-[978px] shrink-0">
        <div className="flex w-[1865px] flex-col"><Toolbar /><Bookmarks /><Page /></div>
        <SideBar />
      </div>
      <TaskBar />
    </div>
  );
}
